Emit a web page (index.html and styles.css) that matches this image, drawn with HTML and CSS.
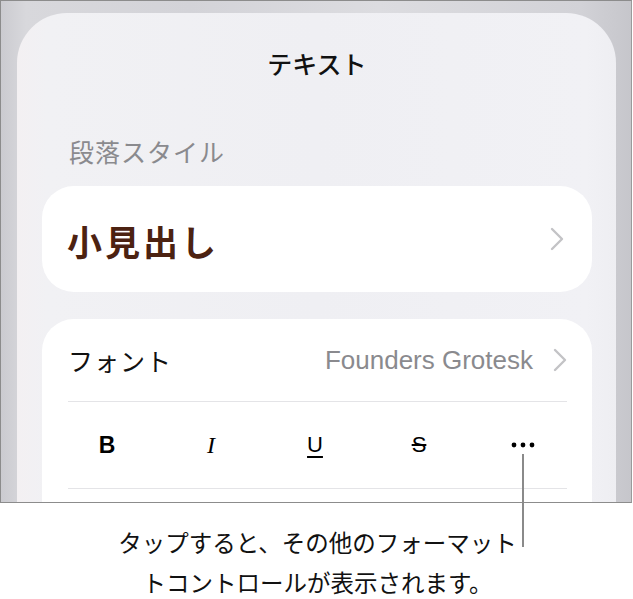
FILE: index.html
```html
<!DOCTYPE html>
<html lang="ja">
<head>
    <meta charset="UTF-8">
    <meta name="viewport" content="width=device-width, initial-scale=1.0">
    <title>テキスト</title>
    <link rel="stylesheet" href="styles.css">
</head>
<body>
    <div class="screen">
        <div class="sheet">
            <div class="sheet-title">テキスト</div>

            <div class="section-label">段落スタイル</div>
            <div class="card style-card">
                <span class="style-name">小見出し</span>
                <svg class="chevron" width="14" height="24" viewBox="0 0 14 24"><polyline points="2,2 12,12 2,22" /></svg>
            </div>

            <div class="card format-card">
                <div class="font-row">
                    <span class="font-label">フォント</span>
                    <span class="font-value">Founders Grotesk</span>
                    <svg class="chevron" width="14" height="24" viewBox="0 0 14 24"><polyline points="2,2 12,12 2,22" /></svg>
                </div>
                <div class="format-row">
                    <span class="fmt fmt-b">B</span>
                    <span class="fmt fmt-i">I</span>
                    <span class="fmt fmt-u">U</span>
                    <span class="fmt fmt-s">S</span>
                    <span class="fmt fmt-more">
                        <svg width="24" height="6" viewBox="0 0 24 6"><circle cx="3" cy="3" r="2.4" /><circle cx="12" cy="3" r="2.4" /><circle cx="21" cy="3" r="2.4" /></svg>
                    </span>
                </div>
                <div class="format-end"></div>
            </div>
        </div>
    </div>

    <!-- 引き出し線 -->
    <div class="callout-line"></div>

    <p class="caption">タップすると、その他のフォーマット<br>トコントロールが表示されます。</p>
</body>
</html>
```

FILE: styles.css
```css
body {
    margin: 0;
    background-color: #ffffff;
    font-family: "Noto Sans CJK JP", "Liberation Sans", sans-serif;
    position: relative;
    width: 633px;
    height: 599px;
    overflow: hidden;
}

.screen {
    width: 630px;
    height: 501px;
    border: 1px solid #8c8c8c;
    border-right-color: #9a9a9a;
    background: linear-gradient(90deg, #cbcbd0 0%, #d8d8dc 4%, #d3d3d8 30%, #dcdce0 60%, #d2d2d7 92%, #c6c6cb 100%);
    overflow: hidden;
}

.sheet {
    margin: 12px 15px 0 16px;
    height: 520px;
    border-radius: 50px 50px 0 0;
    background: linear-gradient(90deg, #f3f0f2 0%, #f1f1f4 5%, #efeff3 50%, #f1f1f5 95%, #eeeef2 100%);
    padding: 0 24px 0 25px;
}

.sheet-title {
    padding-top: 33px;
    text-align: center;
    font-size: 25px;
    font-weight: 500;
    line-height: 34px;
    color: #111111;
}

.section-label {
    margin-top: 54px;
    padding-left: 27px;
    font-size: 25px;
    line-height: 34px;
    color: #8a8a8e;
    letter-spacing: 1px;
}

.card {
    background-color: #ffffff;
    border-radius: 32px;
}

.style-card {
    margin-top: 18px;
    height: 106px;
    display: flex;
    align-items: center;
    padding: 0 28px 0 25px;
}

.style-name {
    flex-grow: 1;
    font-size: 35px;
    font-weight: 700;
    color: #4c2211;
    letter-spacing: 3px;
    padding-top: 2px;
}

.chevron {
    fill: none;
    stroke: #c3c3c6;
    stroke-width: 2.4;
    stroke-linecap: round;
    stroke-linejoin: round;
}

.format-card {
    margin-top: 27px;
    padding: 0 25px 0 26px;
    border-radius: 32px 32px 0 0;
    height: 300px;
}

.font-row {
    height: 82px;
    display: flex;
    align-items: center;
    border-bottom: 1px solid #e4e4e7;
}

.font-label {
    flex-grow: 1;
    font-size: 25px;
    color: #111111;
    letter-spacing: 1px;
}

.font-value {
    font-family: "Liberation Sans", Arial, sans-serif;
    font-size: 26px;
    color: #8a8a8e;
    margin-right: 20px;
}

.format-row {
    height: 86px;
    display: flex;
    align-items: center;
    gap: 64px;
    padding-left: 19px;
    border-bottom: 1px solid #e4e4e7;
}

.fmt {
    width: 40px;
    text-align: center;
    font-family: "Liberation Sans", Arial, sans-serif;
    font-size: 22px;
    color: #000000;
}

.fmt-b {
    font-weight: 700;
    font-size: 23px;
}

.fmt-i {
    font-family: "Liberation Serif", serif;
    font-style: italic;
    font-size: 24px;
}

.fmt-u {
    text-decoration: underline;
    text-underline-offset: 4px;
}

.fmt-s {
    text-decoration: line-through;
}

.fmt-more svg {
    display: block;
    margin: 0 auto;
    fill: #000000;
}

.callout-line {
    position: absolute;
    left: 522px;
    top: 454px;
    width: 2px;
    height: 93px;
    background-color: #8a8a8a;
}

.caption {
    margin: 19px 0 0 0;
    text-align: center;
    font-size: 23.5px;
    line-height: 40px;
    color: #111111;
    padding-left: 2px;
}
```
